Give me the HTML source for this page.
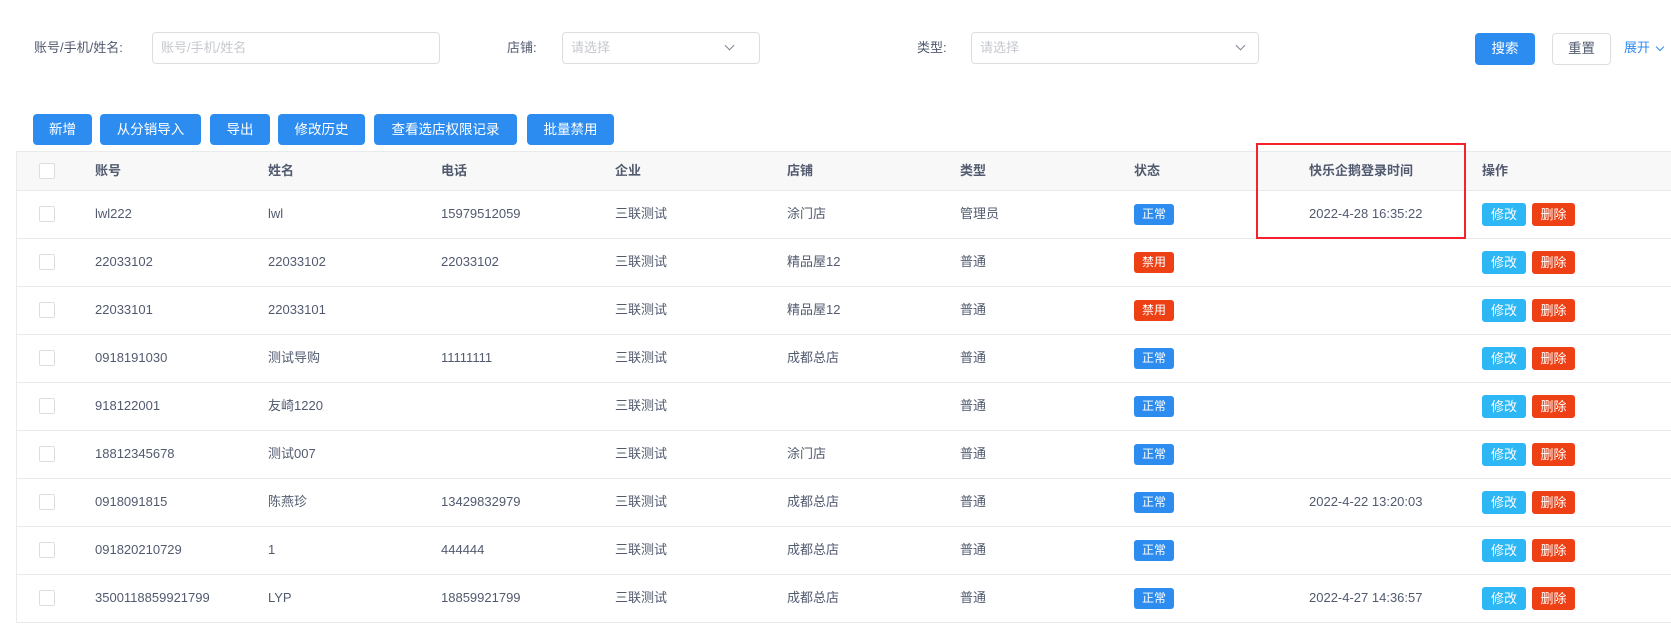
<!DOCTYPE html>
<html><head><meta charset="utf-8"><style>
*{box-sizing:border-box;margin:0;padding:0}
body{width:1671px;height:632px;background:#fff;font-family:"Liberation Sans","Noto Sans CJK SC",sans-serif;font-size:13px;line-height:16px;color:#515a6e;position:relative;overflow:hidden}
.a{position:absolute;white-space:nowrap}
.inp{position:absolute;border:1px solid #dcdee2;border-radius:4px;height:32px;top:32px;background:#fff;color:#c5c8ce;padding:0 8px;line-height:30px}
.chev{position:absolute;top:9px;width:7px;height:7px;border-right:1.3px solid #808695;border-bottom:1.3px solid #808695;transform:rotate(45deg)}
.btn{position:absolute;top:114px;height:31px;background:#2d8cf0;color:#fff;border-radius:4px;text-align:center;line-height:31px;font-size:13.5px}
.tbl{position:absolute;left:16px;top:151px;width:1660px;height:472px;border-left:1px solid #e8eaec;border-top:1px solid #e8eaec}
.hd{position:absolute;left:17px;top:152px;width:1654px;height:39px;background:#f8f8f9;border-bottom:1px solid #e8eaec}
.row{position:absolute;left:17px;width:1654px;height:48px;border-bottom:1px solid #e8eaec}
.cb{position:absolute;left:22px;width:16px;height:16px;border:1px solid #dcdee2;border-radius:2px;background:#fff}
.c{position:absolute;white-space:nowrap;line-height:16px}
.tag{position:absolute;left:1117px;width:40px;height:21px;border-radius:3px;color:#fff;font-size:12px;text-align:center;line-height:21px}
.op{position:absolute;width:44px;height:23px;border-radius:3px;color:#fff;font-size:13px;text-align:center;line-height:23px}
</style></head><body>
<div class="a" style="left:34px;top:40px">账号/手机/姓名:</div>
<div class="inp" style="left:152px;width:288px">账号/手机/姓名</div>
<div class="a" style="left:507px;top:40px">店铺:</div>
<div class="inp" style="left:562px;width:198px">请选择<span class="chev" style="right:26px"></span></div>
<div class="a" style="left:917px;top:40px">类型:</div>
<div class="inp" style="left:971px;width:288px">请选择<span class="chev" style="right:14px"></span></div>
<div class="btn" style="left:1475px;top:33px;width:60px;height:32px;line-height:32px">搜索</div>
<div class="btn" style="left:1552px;top:33px;width:59px;height:32px;line-height:30px;background:#fff;color:#515a6e;border:1px solid #dcdee2">重置</div>
<div class="a" style="left:1624px;top:40px;color:#2d8cf0">展开</div>
<span class="chev" style="left:1657px;top:44px;width:6px;height:6px;border-color:#2d8cf0"></span>

<div class="btn" style="left:33px;width:59px">新增</div>
<div class="btn" style="left:100px;width:101px">从分销导入</div>
<div class="btn" style="left:210px;width:60px">导出</div>
<div class="btn" style="left:278px;width:87px">修改历史</div>
<div class="btn" style="left:374px;width:143px">查看选店权限记录</div>
<div class="btn" style="left:527px;width:87px">批量禁用</div>

<div class="tbl"></div>
<div class="hd" style="font-weight:bold;color:#515a6e">
<div class="cb" style="top:11px"></div>
<div class="c" style="left:78px;top:11px">账号</div>
<div class="c" style="left:251px;top:11px">姓名</div>
<div class="c" style="left:424px;top:11px">电话</div>
<div class="c" style="left:598px;top:11px">企业</div>
<div class="c" style="left:770px;top:11px">店铺</div>
<div class="c" style="left:943px;top:11px">类型</div>
<div class="c" style="left:1117px;top:11px">状态</div>
<div class="c" style="left:1292px;top:11px">快乐企鹅登录时间</div>
<div class="c" style="left:1465px;top:11px">操作</div>
</div>

<div id="rows"></div>
<div style="position:absolute;left:1256px;top:143px;width:210px;height:96px;border:2px solid #f5222d"></div>
<script>
var d=[["lwl222","lwl","15979512059","三联测试","涂门店","管理员",1,"2022-4-28 16:35:22"],
["22033102","22033102","22033102","三联测试","精品屋12","普通",0,""],
["22033101","22033101","","三联测试","精品屋12","普通",0,""],
["0918191030","测试导购","11111111","三联测试","成都总店","普通",1,""],
["918122001","友崎1220","","三联测试","","普通",1,""],
["18812345678","测试007","","三联测试","涂门店","普通",1,""],
["0918091815","陈燕珍","13429832979","三联测试","成都总店","普通",1,"2022-4-22 13:20:03"],
["091820210729","1","444444","三联测试","成都总店","普通",1,""],
["3500118859921799","LYP","18859921799","三联测试","成都总店","普通",1,"2022-4-27 14:36:57"]];
var h="",xs=[78,251,424,598,770,943];
d.forEach(function(r,i){var t=191+i*48;h+='<div class="row" style="top:'+t+'px"><div class="cb" style="top:15px"></div>';
for(var k=0;k<6;k++)h+='<div class="c" style="left:'+xs[k]+'px;top:15px">'+r[k]+'</div>';
h+='<div class="tag" style="top:13px;background:'+(r[6]?'#2d8cf0':'#ed4014')+'">'+(r[6]?'正常':'禁用')+'</div>';
h+='<div class="c" style="left:1292px;top:15px">'+r[7]+'</div>';
h+='<div class="op" style="left:1465px;top:12px;background:#2db7f5">修改</div><div class="op" style="left:1515px;top:12px;width:43px;background:#ed4014">删除</div></div>';});
document.getElementById("rows").innerHTML=h;
</script>
</body></html>
